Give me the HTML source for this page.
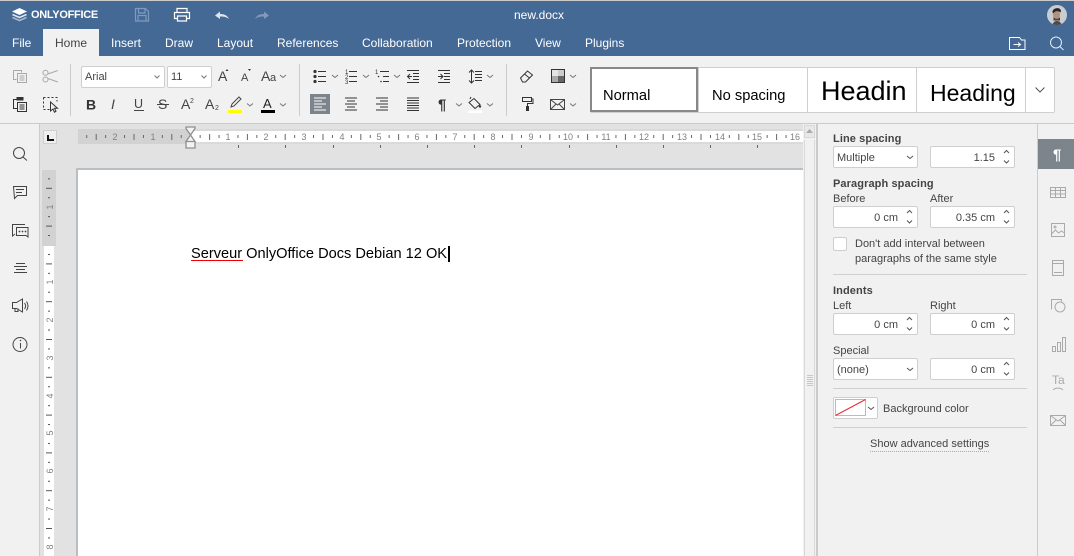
<!DOCTYPE html>
<html><head><meta charset="utf-8"><style>
html,body{margin:0;padding:0;width:1074px;height:556px;overflow:hidden;background:#f1f1f1;font-family:"Liberation Sans",Arial,sans-serif}
.b{position:absolute}
.t{position:absolute;white-space:nowrap;line-height:14px}
.tab{color:#fff;font-size:12px;top:36px}
.lb{font-size:11px;color:#444;margin-top:1px}
.bd{font-size:11px;font-weight:bold;color:#444;margin-top:1px;letter-spacing:.1px}
.f{position:absolute;background:#fff;border:1px solid #cfcfcf;border-radius:2px;box-sizing:border-box;height:22px}
.v{position:absolute;font-size:11px;color:#444;white-space:nowrap;line-height:14px;text-align:right;margin-top:1px}
svg text{font-family:"Liberation Sans",Arial,sans-serif}
</style></head><body>
<div class="b" style="left:0;top:0;width:1074px;height:1px;background:#cbcbcb"></div>
<div class="b" style="left:0;top:1px;width:1074px;height:55px;background:#446995"></div>
<div class="b" style="left:43px;top:29px;width:56px;height:27px;background:#f1f1f1"></div>
<div class="t" style="left:31px;top:8px;color:#fff;font-size:11px;font-weight:bold;letter-spacing:-.3px">ONLYOFFICE</div>
<div class="t" style="left:514px;top:8px;color:#fff;font-size:12px">new.docx</div>
<div class="t tab" style="left:12px">File</div>
<div class="t tab" style="left:55px;color:#444">Home</div>
<div class="t tab" style="left:111px">Insert</div>
<div class="t tab" style="left:165px">Draw</div>
<div class="t tab" style="left:217px">Layout</div>
<div class="t tab" style="left:277px">References</div>
<div class="t tab" style="left:362px">Collaboration</div>
<div class="t tab" style="left:457px">Protection</div>
<div class="t tab" style="left:535px">View</div>
<div class="t tab" style="left:585px">Plugins</div>

<div class="b" style="left:0;top:123px;width:1074px;height:1px;background:#cbcbcb"></div>
<div class="b" style="left:70px;top:64px;width:1px;height:52px;background:#cbcbcb"></div>
<div class="b" style="left:299px;top:64px;width:1px;height:52px;background:#cbcbcb"></div>
<div class="b" style="left:506px;top:64px;width:1px;height:52px;background:#cbcbcb"></div>
<div class="f" style="left:81px;top:66px;width:84px"></div>
<div class="f" style="left:167px;top:66px;width:45px"></div>
<div class="t" style="left:85px;top:70px;font-size:11px;color:#444">Arial</div>
<div class="t" style="left:171px;top:70px;font-size:11px;color:#444">11</div>
<div class="b" style="left:310px;top:94px;width:20px;height:20px;background:#7d858c"></div>

<!-- styles gallery -->
<div class="b" style="left:590px;top:67px;width:465px;height:46px;background:#fff;border:1px solid #cfcfcf;box-sizing:border-box;border-radius:2px"></div>
<div class="b" style="left:590px;top:67px;width:108px;height:45px;border:2px solid #888;box-sizing:border-box"></div>
<div class="b" style="left:698px;top:68px;width:1px;height:44px;background:#cfcfcf"></div>
<div class="b" style="left:807px;top:68px;width:1px;height:44px;background:#cfcfcf"></div>
<div class="b" style="left:916px;top:68px;width:1px;height:44px;background:#cfcfcf"></div>
<div class="b" style="left:1025px;top:68px;width:1px;height:44px;background:#cfcfcf"></div>
<div class="t" style="left:603px;top:89px;font-size:14.7px;color:#000">Normal</div>
<div class="t" style="left:712px;top:89px;font-size:14.7px;color:#000">No spacing</div>
<div class="t" style="left:821px;top:84px;font-size:27px;color:#000">Headin</div>
<div class="t" style="left:930px;top:86px;font-size:23px;color:#000">Heading</div>

<!-- canvas -->
<div class="b" style="left:39px;top:124px;width:1px;height:432px;background:#cbcbcb"></div>
<div class="b" style="left:40px;top:124px;width:763px;height:432px;background:#e2e2e2"></div>
<div class="b" style="left:43px;top:130px;width:14px;height:14px;background:#efefef;border:1px solid #cfcfcf;box-sizing:border-box"></div>
<div class="b" style="left:47px;top:135px;width:7px;height:6px;border-left:2px solid #111;border-bottom:2px solid #111;box-sizing:border-box"></div>
<div class="b" style="left:78px;top:129px;width:113px;height:15px;background:#d2d2d2"></div>
<div class="b" style="left:191px;top:129px;width:612px;height:15px;background:#fff;border-top:2px solid #dadada;border-bottom:2px solid #dadada;box-sizing:border-box"></div>
<div class="b" style="left:42px;top:170px;width:14px;height:76px;background:#d2d2d2"></div>
<div class="b" style="left:44px;top:246px;width:10px;height:310px;background:#fff"></div>
<div class="b" style="left:76px;top:168px;width:727px;height:388px;background:#fff;border-left:2px solid #b8bec2;border-top:2px solid #b8bec2;box-sizing:border-box"></div>

<div class="t" style="left:191px;top:246px;font-size:14.6px;line-height:16px;color:#000">Serveur OnlyOffice Docs Debian 12 OK</div>
<div class="b" style="left:191px;top:260px;width:52px;height:1px;background:#e00"></div>
<div class="b" style="left:448px;top:246px;width:2px;height:16px;background:#000"></div>

<!-- scroll and panel -->
<div class="b" style="left:803px;top:124px;width:15px;height:432px;background:#f1f1f1;border-right:2px solid #cbcbcb;box-sizing:border-box"></div>
<div class="b" style="left:804px;top:125px;width:11px;height:13px;background:#e8e8e8;border:1px solid #d8d8d8;box-sizing:border-box"></div>
<div class="b" style="left:804px;top:140px;width:11px;height:416px;border-left:1px solid #d8d8d8;border-right:1px solid #d8d8d8;box-sizing:border-box"></div>
<div class="b" style="left:818px;top:124px;width:219px;height:432px;background:#f1f1f1"></div>
<div class="b" style="left:1037px;top:124px;width:1px;height:432px;background:#cbcbcb"></div>
<div class="b" style="left:1038px;top:139px;width:36px;height:30px;background:#7d858c"></div>

<div class="t bd" style="left:833px;top:131px">Line spacing</div>
<div class="f" style="left:833px;top:146px;width:85px"></div>
<div class="t lb" style="left:837px;top:150px">Multiple</div>
<div class="f" style="left:930px;top:146px;width:85px"></div>
<div class="v" style="right:79px;top:150px">1.15</div>

<div class="t bd" style="left:833px;top:176px">Paragraph spacing</div>
<div class="t lb" style="left:833px;top:191px">Before</div>
<div class="t lb" style="left:930px;top:191px">After</div>
<div class="f" style="left:833px;top:206px;width:85px"></div>
<div class="v" style="right:176px;top:210px">0 cm</div>
<div class="f" style="left:930px;top:206px;width:85px"></div>
<div class="v" style="right:79px;top:210px">0.35 cm</div>
<div class="f" style="left:833px;top:237px;width:14px;height:14px"></div>
<div class="t lb" style="left:855px;top:236px">Don't add interval between</div>
<div class="t lb" style="left:855px;top:251px">paragraphs of the same style</div>
<div class="b" style="left:833px;top:274px;width:194px;height:1px;background:#cfcfcf"></div>

<div class="t bd" style="left:833px;top:283px">Indents</div>
<div class="t lb" style="left:833px;top:298px">Left</div>
<div class="t lb" style="left:930px;top:298px">Right</div>
<div class="f" style="left:833px;top:313px;width:85px"></div>
<div class="v" style="right:176px;top:317px">0 cm</div>
<div class="f" style="left:930px;top:313px;width:85px"></div>
<div class="v" style="right:79px;top:317px">0 cm</div>
<div class="t lb" style="left:833px;top:343px">Special</div>
<div class="f" style="left:833px;top:358px;width:85px"></div>
<div class="t lb" style="left:837px;top:362px">(none)</div>
<div class="f" style="left:930px;top:358px;width:85px"></div>
<div class="v" style="right:79px;top:362px">0 cm</div>
<div class="b" style="left:833px;top:388px;width:194px;height:1px;background:#cfcfcf"></div>
<div class="f" style="left:833px;top:397px;width:45px"></div>
<div class="t lb" style="left:883px;top:401px">Background color</div>
<div class="b" style="left:833px;top:427px;width:194px;height:1px;background:#cfcfcf"></div>
<div class="t lb" style="left:870px;top:436px;border-bottom:1px dotted #aaa;padding-bottom:0">Show advanced settings</div>

<svg class="b" style="left:0;top:0" width="1074" height="556" viewBox="0 0 1074 556" fill="none">
<defs>
<pattern id="h" x="190.7" y="129" width="37.8" height="20" patternUnits="userSpaceOnUse">
<path d="M9.45 6v3M18.9 5v6M28.35 6v3" stroke="#666"/>
</pattern>
<pattern id="v" x="0" y="245" width="20" height="37.8" patternUnits="userSpaceOnUse">
<path d="M4 9.45h2M2 18.9h6M4 28.35h2" stroke="#555"/>
</pattern>
<clipPath id="av"><circle cx="1057" cy="15" r="10"/></clipPath>
</defs>

<!-- logo -->
<path d="M19.500 8l7.500 3.500-7.500 3.500-7.500-3.500z" fill="#fff"/>
<path d="M12.500 14.500l7 3 7-3" stroke="#e0e6ef" stroke-width="1.500"/>
<path d="M12.500 17.500l7 3 7-3" stroke="#a9bad0" stroke-width="1.500"/>

<!-- header icons -->
<g stroke="#7e9abd" stroke-width="1.200"><path d="M135.500 8.500h10l3 3v9.500h-13z"/><path d="M138.500 8.500v4.500h6.500v-4.500M138 21v-5.500h8V21"/></g>
<g stroke="#fff" stroke-width="1.200"><path d="M177 12.500V8.500h10v4M177 18.500h-2.500v-6h15v6H187"/><path d="M177.500 16h9v5h-9z"/></g>
<path d="M215 15.500l5-4v2.500c4 0 7 1 9 5-2.500-2-5-2.500-9-2.500V19z" fill="#dde5ef"/>
<path d="M269 15.500l-5-4v2.500c-4 0-7 1-9 5 2.500-2 5-2.500 9-2.500V19z" fill="#7f9abb"/>
<!-- avatar -->
<circle cx="1057" cy="15" r="10" fill="#c9cdd0"/>
<g clip-path="url(#av)"><ellipse cx="1056.500" cy="14.500" rx="3.500" ry="5" fill="#b09282"/><path d="M1052.500 12c0-4.500 8-5.500 8.500-1l-.5 1.500c-2-2-5.500-2-7.500 1z" fill="#2c2420"/><path d="M1053.500 17c1.500 2.500 5 2.500 6.500 0v3.500h-6.500z" fill="#4a3d34"/><path d="M1052 26c1-4 3-5 5-5s4 1 5 5z" fill="#4b4b4a"/></g>
<!-- open location, search -->
<g stroke="#fff" stroke-width="1"><path d="M1009.500 37.500h10l2 2.500h3.500v9.500h-15.500z"/><path d="M1013.500 44.500h7M1018 42.500l2.500 2-2.500 2"/></g>
<g stroke="#e6ebf2" stroke-width="1"><circle cx="1056" cy="42.500" r="5.500"/><path d="M1060 46.500l3.500 3.500"/></g>

<!-- toolbar row 1 left -->
<g stroke="#a9a9a9" stroke-width="1"><path d="M13.500 70.500h8v2M13.500 70.500v9h3"/><path d="M17.500 73.500h9v9h-9zM19.500 76h5M19.500 78h5M19.500 80h5"/>
<circle cx="45.500" cy="72.800" r="2.500"/><circle cx="45.500" cy="79.500" r="2.500"/><path d="M47.800 74l10-3.500M47.800 78.500l10 3.500"/></g>
<g stroke="#333" stroke-width="1"><path d="M16.500 99.500h-3v9h3.500"/><path d="M17.500 102.500h9v9h-9zM19.500 105h5M19.500 107h5M19.500 109h5"/><path d="M17 97.500h6v2.500h-6z" fill="#333"/>
<path d="M43.500 97.500h13.500v4M43.500 97.500v12h6" stroke-dasharray="2 2"/>
<path d="M50.500 102v9l2.500-2 1.500 3.200 1.500-1-1.500-3h3z"/></g>
<!-- chevrons -->
<path d="M154.500 75.500l2.500 2.500 2.500-2.500M201.500 75.500l2.500 2.500 2.500-2.500M280 75l3 2.500 3-2.500M332 75l3 2.500 3-2.500M363 75l3 2.500 3-2.500M394 75l3 2.500 3-2.500M487 75l3 2.500 3-2.500M570 75l3 2.500 3-2.500M247 103.500l3 2.500 3-2.500M280 103.500l3 2.500 3-2.500M456 103.500l3 2.500 3-2.500M487 103.500l3 2.500 3-2.500M570 103.500l3 2.500 3-2.500" stroke="#777"/>
<g fill="#444" font-size="14">
<text x="218" y="81">A</text><text x="241" y="81" font-size="11">A</text><text x="261" y="81">A</text><text x="270" y="81" font-size="11">a</text>
<text x="86" y="109.500" font-weight="bold" font-size="14" fill="#333">B</text>
<text x="111" y="109" font-style="italic" font-size="14">I</text>
<text x="134" y="108" font-size="12.500">U</text>
<text x="158" y="109" font-size="14">S</text>
<text x="181" y="109">A</text><text x="190" y="103" font-size="7">2</text>
<text x="205" y="109">A</text><text x="215" y="110" font-size="7">2</text>
<text x="263" y="108" font-size="13" fill="#222">A</text>
</g>
<path d="M225.500 71l1.500-2 1.500 2zM248 69l1.500 2 1.500-2z" fill="#333"/>
<path d="M134 110.500h10M157 104.500h12" stroke="#444"/>
<!-- highlight / color -->
<path d="M232 104l7-7 2 2-7 7-3 1z" stroke="#444"/>
<path d="M228 110h14v3h-14z" fill="#ff0"/>
<path d="M261 110h14v3h-14z" fill="#000"/>

<!-- lists -->
<g stroke="#333" stroke-width="1">
<path d="M318 71.500h8M318 76.500h8M318 81.500h8"/>
<path d="M349 71.500h8M349 76.500h8M349 81.500h8"/>
<path d="M380 71.500h9M383 76.500h6M383 81.500h6"/>
<path d="M407 70.500h12M413 73.500h6M413 76.500h6M413 79.500h6M407 82.500h12M412 76.500h-4.500M410 74l-2.500 2.500 2.500 2.500"/>
<path d="M438 70.500h12M444 73.500h6M444 76.500h6M444 79.500h6M438 82.500h12M438 76.500h4.500M440.500 74l2.500 2.500-2.500 2.500"/>
<path d="M471.500 70v13M469 72.500l2.500-2.500 2.500 2.500M469 80.500l2.500 2.500 2.500-2.500M475 71.500h7M475 74.500h7M475 77.500h7M475 80.500h7"/>
<path d="M345 98.500h12M347 101.500h8M345 104.500h12M347 107.500h8M345 110.500h12" transform="translate(0,-.5)"/>
<path d="M376 98.500h12M380 101.500h8M376 104.500h12M380 107.500h8M376 110.500h12" transform="translate(0,-.5)"/>
<path d="M407 98h12M407 100.500h12M407 103h12M407 105.500h12M407 108h12M407 110.500h12"/>
</g>
<g fill="#333"><circle cx="315" cy="71.500" r="1.600"/><circle cx="315" cy="76.500" r="1.600"/><circle cx="315" cy="81.500" r="1.600"/><circle cx="378.500" cy="76.500" r=".8"/><circle cx="381" cy="81.500" r=".8"/></g>
<g fill="#333" font-size="6"><text x="345" y="74">1</text><text x="345" y="79">2</text><text x="345" y="84">3</text><text x="375" y="74">1</text></g>
<path d="M313 98.500h12M313 101.500h8M313 104.500h12M313 107.500h8M313 110.500h12" stroke="#fff" transform="translate(1,-.5)"/>
<!-- pilcrow -->
<text x="438" y="109.500" font-size="15" font-weight="bold" fill="#333">¶</text>
<!-- fill -->
<path d="M471 97l-1 2M469 102.500l5-4 6 6-5 4z" stroke="#333"/><circle cx="480" cy="106.500" r="1.200" fill="#333"/>
<path d="M468 110.500h14v2.500h-14z" fill="#fff"/>
<!-- eraser -->
<path d="M520.500 78l7-7 5 4-7 7h-3z" stroke="#333"/><path d="M524.500 74l5 4" stroke="#333"/>
<!-- shading -->
<rect x="551.500" y="69.500" width="13" height="13" stroke="#333" fill="#fff"/><path d="M552 76h6v6h-6z" fill="#aaa"/><path d="M558 76h6v6h-6z" fill="#666"/><path d="M552 70h6v6h-6z" fill="#e4e4e4"/><path d="M558 70h6v6h-6z" fill="#ccc"/>
<!-- painter -->
<path d="M522.500 97.500h9v4h-9z" stroke="#333"/><path d="M531.500 99h1.500v4.500h-5.500v3" stroke="#333"/><path d="M526 106h3v5h-3z" fill="#333"/>
<!-- mail -->
<path d="M550.500 99.500h14v10h-14zM551 100l6.500 5 6.500-5M551 109l5-5M564 109l-5-5" stroke="#444"/>
<!-- gallery chevron -->
<path d="M1035.500 87.500l4.500 4.500 4.500-4.500" stroke="#555"/>

<!-- left icons -->
<g stroke="#444" stroke-width="1">
<circle cx="19" cy="153" r="5.500"/><path d="M23 157l4 3.500"/>
<path d="M13.500 186.500h13v9h-9l-3 3z M16 189.500h8M16 192.500h6"/>
<path d="M25 224.500h-12.500v11.500l2.500-2"/>
<path d="M16.500 227.500h11.500v9.500l-2-1.500h-9.500z"/>
<path d="M16 263.500h9M14 266.500h13M16 269.500h9M14 272.500h13"/>
<path d="M12.500 302.500h4l6-3.500v13l-6-3.500h-4zM15 308.500v3h3v-3M24.500 303c1.500 2 1.500 4 0 6M26.500 301.500c2 3 2 6 0 9"/>
<circle cx="20" cy="344.500" r="7"/><path d="M20.500 343v5.500"/>
</g>
<g fill="#444"><circle cx="20.500" cy="340.500" r=".8"/><circle cx="19.500" cy="231.500" r=".9"/><circle cx="22.500" cy="231.500" r=".9"/><circle cx="25.500" cy="231.500" r=".9"/></g>

<!-- rulers -->
<rect x="78" y="129" width="725" height="15" fill="url(#h)"/>
<g fill="#808080" font-size="9" text-anchor="middle">
<text x="115" y="140">2</text><text x="153" y="140">1</text><text x="228" y="140">1</text><text x="266" y="140">2</text><text x="304" y="140">3</text><text x="342" y="140">4</text><text x="379" y="140">5</text><text x="417" y="140">6</text><text x="455" y="140">7</text><text x="493" y="140">8</text><text x="531" y="140">9</text><text x="568" y="140">10</text><text x="606" y="140">11</text><text x="644" y="140">12</text><text x="682" y="140">13</text><text x="720" y="140">14</text><text x="757" y="140">15</text><text x="795" y="140">16</text>
</g>
<path d="M186 127h9v1.500l-4.500 6.500 4.500 6.500h-9l4.500-6.500-4.500-6.500zM186 141.500h9v6.500h-9z" stroke="#8f8f8f" stroke-width="1.300" fill="#f3f3f3"/>
<path d="M238.500 145v3M285.500 145v3M333.500 145v3M380.500 145v3M427.500 145v3M474.500 145v3M521.500 145v3M569.500 145v3M616.500 145v3M663.500 145v3M710.500 145v3M757.500 145v3" stroke="#666"/>
<!-- vertical ruler ticks -->
<g transform="translate(44,0)">
<rect x="0" y="170" width="10" height="386" fill="url(#v)"/>
</g>
<g fill="#808080" font-size="9" text-anchor="middle">
<text transform="translate(53,207) rotate(-90)">1</text>
<text transform="translate(53,282) rotate(-90)">1</text>
<text transform="translate(53,320) rotate(-90)">2</text>
<text transform="translate(53,358) rotate(-90)">3</text>
<text transform="translate(53,396) rotate(-90)">4</text>
<text transform="translate(53,433) rotate(-90)">5</text>
<text transform="translate(53,471) rotate(-90)">6</text>
<text transform="translate(53,509) rotate(-90)">7</text>
<text transform="translate(53,547) rotate(-90)">8</text>
</g>

<!-- scrollbar -->
<path d="M806 133l3.500-4 3.500 4z" fill="#aaa"/>
<path d="M807 375.500h6M807 377.500h6M807 379.500h6M807 381.500h6M807 383.500h6M807 385.500h6" stroke="#c8c8c8"/>

<!-- panel chevrons -->
<g stroke="#555">
<path d="M907 156l3 2.500 3-2.500M907 368l3 2.500 3-2.500"/>
<path d="M1004 153l2.500-2.500 2.500 2.500M1004 160.500l2.500 2.500 2.500-2.500"/>
<path d="M907 213l2.500-2.500 2.500 2.500M907 220.500l2.500 2.500 2.500-2.500"/>
<path d="M1004 213l2.500-2.500 2.500 2.500M1004 220.500l2.500 2.500 2.500-2.500"/>
<path d="M907 320l2.500-2.500 2.500 2.500M907 327.500l2.500 2.500 2.500-2.500"/>
<path d="M1004 320l2.500-2.500 2.500 2.500M1004 327.500l2.500 2.500 2.500-2.500"/>
<path d="M1004 365l2.500-2.500 2.500 2.500M1004 372.500l2.500 2.500 2.500-2.500"/>
<path d="M868 407l3 2.500 3-2.500"/>
</g>
<rect x="835.500" y="399.500" width="30" height="16" stroke="#bbb" fill="#fff"/>
<path d="M835.500 415.500l30-16" stroke="#e8323c" stroke-width="1.200"/>

<!-- right tab icons -->
<text x="1053" y="159.500" font-size="15" font-weight="bold" fill="#fff">¶</text>
<g stroke="#aaa" stroke-width="1">
<path d="M1050.500 187.500h15v10h-15zM1050.500 190.500h15M1050.500 194h15M1055.500 187.500v10M1060.500 187.500v10"/>
<path d="M1051.500 223.500h13v13h-13zM1051.500 234l4-4 3 3 3-2 3 2"/><circle cx="1055" cy="227" r="1"/>
<path d="M1052.500 260.500h11v15h-11zM1052.500 263.500h11M1054 272.500h8"/>
<path d="M1051.500 309.500v-10h10v2"/><circle cx="1060" cy="307" r="5" fill="#f1f1f1"/>
<path d="M1052.500 346.500h3v5h-3zM1057.500 342.500h3v9h-3zM1062.500 337.500h3v14h-3z"/>
<path d="M1053 390c2-2.500 8-2.500 10 0"/>
<path d="M1050.500 415.500h15v10h-15zM1051 416l7 5 7-5M1051 425l5-5M1065 425l-5-5"/>
</g>
<text x="1052" y="384" font-size="12" fill="#aaa">Ta</text>
</svg>
</body></html>
